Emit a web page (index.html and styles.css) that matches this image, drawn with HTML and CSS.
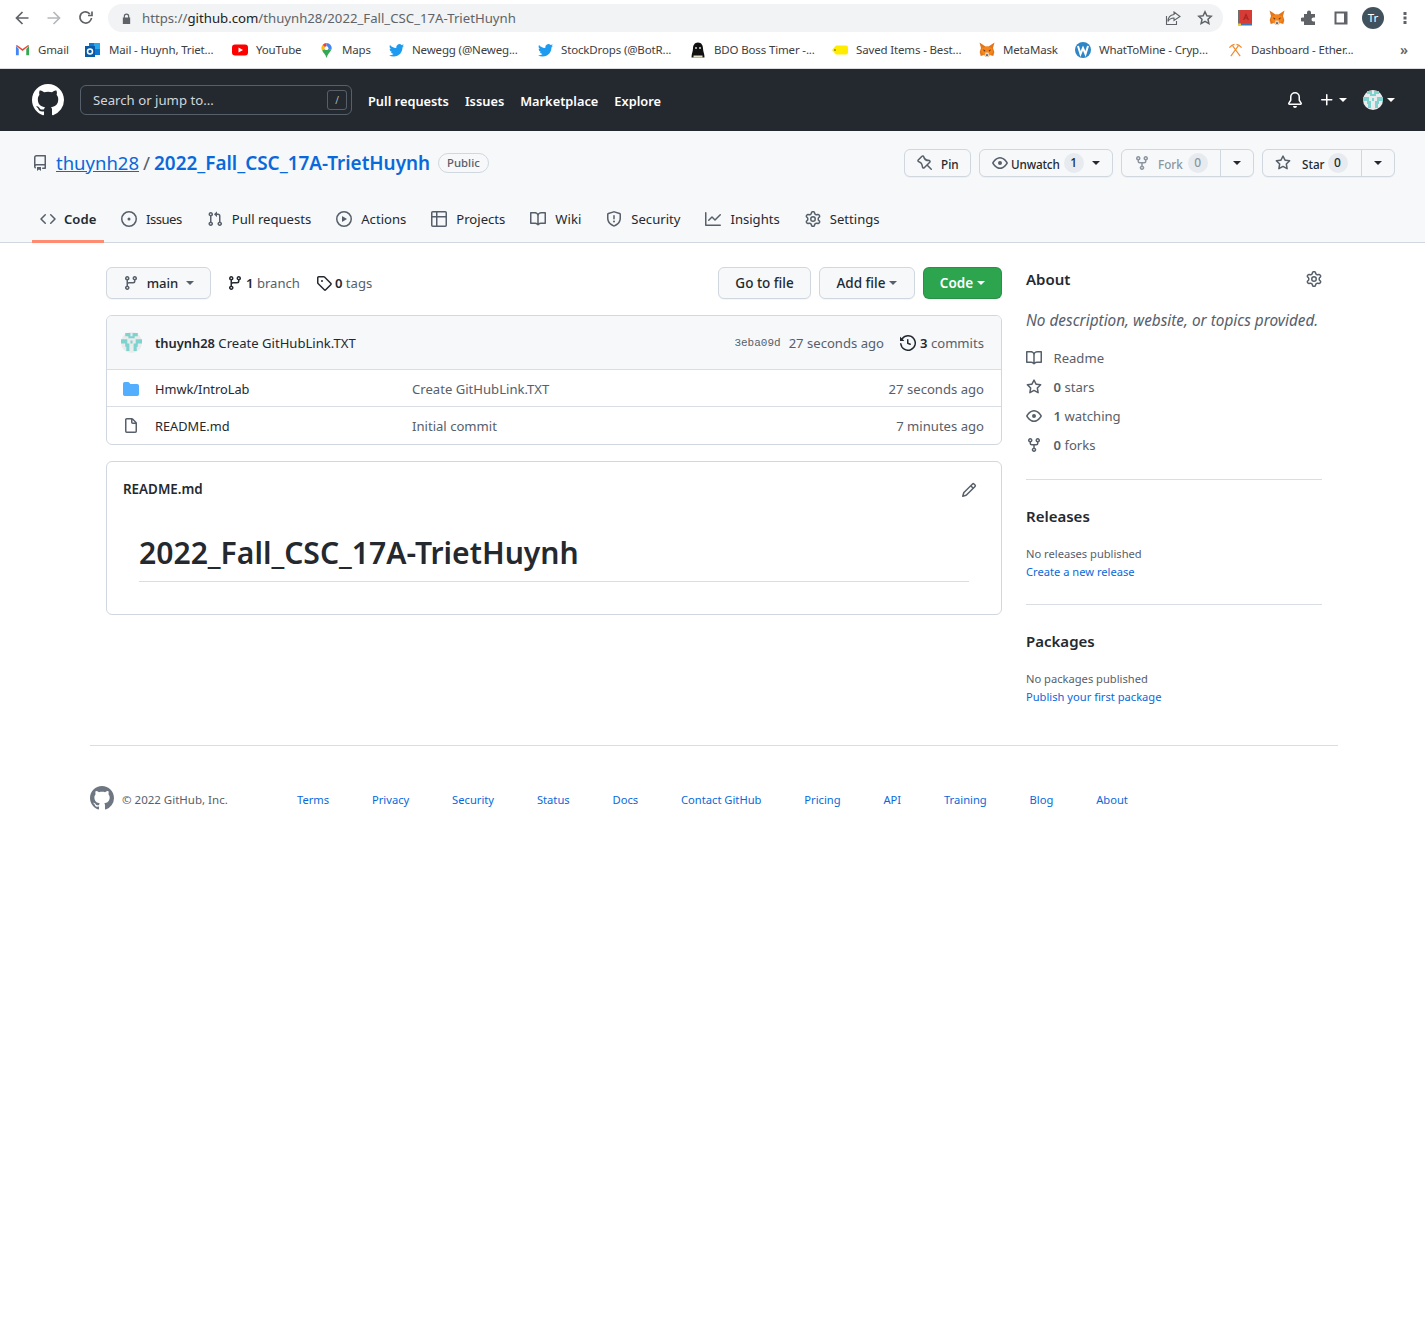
FILE: index.html
```html
<!DOCTYPE html>
<html lang="en">
<head>
<meta charset="utf-8">
<title>thuynh28/2022_Fall_CSC_17A-TrietHuynh</title>
<link rel="stylesheet" href="styles.css">
</head>
<body>
<svg class="sprite" xmlns="http://www.w3.org/2000/svg">
<symbol id="mark" viewBox="0 0 16 16"><path d="M8 0C3.58 0 0 3.58 0 8c0 3.54 2.29 6.53 5.47 7.59.4.07.55-.17.55-.38 0-.19-.01-.82-.01-1.49-2.01.37-2.53-.49-2.69-.94-.09-.23-.48-.94-.82-1.13-.28-.15-.68-.52-.01-.53.63-.01 1.08.58 1.23.82.72 1.21 1.87.87 2.33.66.07-.52.28-.87.51-1.07-1.78-.2-3.64-.89-3.64-3.95 0-.87.31-1.59.82-2.15-.08-.2-.36-1.02.08-2.12 0 0 .67-.21 2.2.82.64-.18 1.32-.27 2-.27.68 0 1.36.09 2 .27 1.53-1.04 2.2-.82 2.2-.82.44 1.1.16 1.92.08 2.12.51.56.82 1.27.82 2.15 0 3.07-1.87 3.75-3.65 3.95.29.25.54.73.54 1.48 0 1.07-.01 1.93-.01 2.2 0 .21.15.46.55.38A8.013 8.013 0 0016 8c0-4.42-3.58-8-8-8z"/></symbol>
<symbol id="repo" viewBox="0 0 16 16"><path d="M2 2.5A2.5 2.5 0 014.5 0h8.75a.75.75 0 01.75.75v12.5a.75.75 0 01-.75.75h-2.5a.75.75 0 110-1.5h1.75v-2h-8a1 1 0 00-.714 1.7.75.75 0 01-1.072 1.05A2.495 2.495 0 012 11.5v-9zm10.5-1V9h-8c-.356 0-.694.074-1 .208V2.5a1 1 0 011-1h8zM5 12.25v3.25a.25.25 0 00.4.2l1.45-1.087a.25.25 0 01.3 0L8.6 15.7a.25.25 0 00.4-.2v-3.25a.25.25 0 00-.25-.25h-3.5a.25.25 0 00-.25.25z"/></symbol>
<symbol id="code" viewBox="0 0 16 16"><path d="M4.72 3.22a.75.75 0 011.06 1.06L2.06 8l3.72 3.72a.75.75 0 11-1.06 1.06L.47 8.53a.75.75 0 010-1.06l4.25-4.25zm6.56 0a.75.75 0 10-1.06 1.06L13.94 8l-3.72 3.72a.75.75 0 101.06 1.06l4.25-4.25a.75.75 0 000-1.06l-4.25-4.25z"/></symbol>
<symbol id="issue" viewBox="0 0 16 16"><path d="M8 9.5a1.5 1.5 0 100-3 1.5 1.5 0 000 3z"/><path d="M8 0a8 8 0 100 16A8 8 0 008 0zM1.5 8a6.5 6.5 0 1113 0 6.5 6.5 0 01-13 0z"/></symbol>
<symbol id="pr" viewBox="0 0 16 16"><path d="M7.177 3.073L9.573.677A.25.25 0 0110 .854v4.792a.25.25 0 01-.427.177L7.177 3.427a.25.25 0 010-.354zM3.75 2.5a.75.75 0 100 1.5.75.75 0 000-1.5zm-2.25.75a2.25 2.25 0 113 2.122v5.256a2.251 2.251 0 11-1.5 0V5.372A2.25 2.25 0 011.5 3.25zM11 2.5h-1V4h1a1 1 0 011 1v5.628a2.251 2.251 0 101.5 0V5A2.5 2.5 0 0011 2.5zm1 10.25a.75.75 0 111.5 0 .75.75 0 01-1.5 0zM3.75 12a.75.75 0 100 1.5.75.75 0 000-1.5z"/></symbol>
<symbol id="play" viewBox="0 0 16 16"><path d="M1.5 8a6.5 6.5 0 1113 0 6.5 6.5 0 01-13 0zM8 0a8 8 0 100 16A8 8 0 008 0zM6.379 5.227A.25.25 0 006 5.442v5.117a.25.25 0 00.379.214l4.264-2.559a.25.25 0 000-.428L6.379 5.227z"/></symbol>
<symbol id="table" viewBox="0 0 16 16"><path d="M0 1.75C0 .784.784 0 1.75 0h12.5C15.216 0 16 .784 16 1.75v12.5A1.75 1.75 0 0114.25 16H1.75A1.75 1.75 0 010 14.25V1.75zM1.5 6.5v7.75c0 .138.112.25.25.25H5v-8H1.5zM5 5H1.5V1.75a.25.25 0 01.25-.25H5V5zm1.5 1.5v8h7.75a.25.25 0 00.25-.25V6.5h-8zm8-1.5h-8V1.5h7.75a.25.25 0 01.25.25V5z"/></symbol>
<symbol id="book" viewBox="0 0 16 16"><path d="M0 1.75A.75.75 0 01.75 1h4.253c1.227 0 2.317.59 3 1.501A3.744 3.744 0 0111.006 1h4.245a.75.75 0 01.75.75v10.5a.75.75 0 01-.75.75h-4.507a2.25 2.25 0 00-1.591.659l-.622.621a.75.75 0 01-1.06 0l-.622-.621A2.25 2.25 0 005.258 13H.75a.75.75 0 01-.75-.75V1.75zm8.755 3a2.25 2.25 0 012.25-2.25H14.5v9h-3.757c-.71 0-1.4.201-1.992.572l.004-7.322zm-1.504 7.324l.004-5.073-.002-2.253A2.25 2.25 0 005.003 2.5H1.5v9h3.757a3.75 3.75 0 011.994.574z"/></symbol>
<symbol id="shield" viewBox="0 0 16 16"><path d="M7.467.133a1.75 1.75 0 011.066 0l5.25 1.68A1.75 1.75 0 0115 3.48V7c0 1.566-.32 3.182-1.303 4.682-.983 1.498-2.585 2.813-5.032 3.855a1.7 1.7 0 01-1.33 0c-2.447-1.042-4.049-2.357-5.032-3.855C1.32 10.182 1 8.566 1 7V3.48a1.75 1.75 0 011.217-1.667l5.25-1.68zm.61 1.429a.25.25 0 00-.153 0l-5.25 1.68a.25.25 0 00-.174.238V7c0 1.358.275 2.666 1.057 3.86.784 1.194 2.121 2.34 4.366 3.297a.2.2 0 00.154 0c2.245-.956 3.582-2.104 4.366-3.298C13.225 9.666 13.5 8.36 13.5 7V3.48a.25.25 0 00-.174-.237l-5.25-1.68zM9 10.5a1 1 0 11-2 0 1 1 0 012 0zm-.25-5.75a.75.75 0 10-1.5 0v3a.75.75 0 001.5 0v-3z"/></symbol>
<symbol id="graph" viewBox="0 0 16 16"><path d="M1.5 1.75a.75.75 0 00-1.5 0v12.5c0 .414.336.75.75.75h14.5a.75.75 0 000-1.5H1.5V1.75zm14.28 2.53a.75.75 0 00-1.06-1.06L10 7.94 7.53 5.47a.75.75 0 00-1.06 0L3.22 8.72a.75.75 0 001.06 1.06L7 7.06l2.47 2.47a.75.75 0 001.06 0l5.25-5.25z"/></symbol>
<symbol id="gear" viewBox="0 0 16 16"><path d="M7.429 1.525a6.593 6.593 0 011.142 0c.036.003.108.036.137.146l.289 1.105c.147.56.55.967.997 1.189.174.086.341.183.501.29.417.278.97.423 1.53.27l1.102-.303c.11-.03.175.016.195.046.219.31.41.641.573.989.014.031.022.11-.059.19l-.815.806c-.411.406-.562.957-.53 1.456a4.588 4.588 0 010 .582c-.032.499.119 1.05.53 1.456l.815.806c.08.08.073.159.059.19a6.494 6.494 0 01-.573.99c-.02.029-.086.074-.195.045l-1.103-.303c-.559-.153-1.112-.008-1.529.27-.16.107-.327.204-.5.29-.449.222-.851.628-.998 1.189l-.289 1.105c-.029.11-.101.143-.137.146a6.613 6.613 0 01-1.142 0c-.036-.003-.108-.037-.137-.146l-.289-1.105c-.147-.56-.55-.967-.997-1.189a4.502 4.502 0 01-.501-.29c-.417-.278-.97-.423-1.53-.27l-1.102.303c-.11.03-.175-.016-.195-.046a6.492 6.492 0 01-.573-.989c-.014-.031-.022-.11.059-.19l.815-.806c.411-.406.562-.957.53-1.456a4.587 4.587 0 010-.582c.032-.499-.119-1.05-.53-1.456l-.815-.806c-.08-.08-.073-.159-.059-.19a6.44 6.44 0 01.573-.99c.02-.029.086-.075.195-.045l1.103.303c.559.153 1.112.008 1.529-.27.16-.107.327-.204.5-.29.449-.222.851-.628.998-1.189l.289-1.105c.029-.11.101-.143.137-.146zM8 0c-.236 0-.47.01-.701.03-.743.065-1.29.615-1.458 1.261l-.29 1.106c-.017.066-.078.158-.211.224a5.994 5.994 0 00-.668.386c-.123.082-.233.09-.3.071L3.27 2.776c-.644-.177-1.392.02-1.82.63a7.977 7.977 0 00-.704 1.217c-.315.675-.111 1.422.363 1.891l.815.806c.05.048.098.147.088.294a6.084 6.084 0 000 .772c.01.147-.038.246-.088.294l-.815.806c-.474.469-.678 1.216-.363 1.891.2.428.436.835.704 1.218.428.609 1.176.806 1.82.63l1.103-.303c.066-.019.176-.011.299.071.213.143.436.272.668.386.133.066.194.158.212.224l.289 1.106c.169.646.715 1.196 1.458 1.26a8.094 8.094 0 001.402 0c.743-.064 1.29-.614 1.458-1.26l.29-1.106c.017-.066.078-.158.211-.224a5.98 5.98 0 00.668-.386c.123-.082.233-.09.3-.071l1.102.302c.644.177 1.392-.02 1.82-.63.268-.382.505-.789.704-1.217.315-.675.111-1.422-.364-1.891l-.814-.806c-.05-.048-.098-.147-.088-.294a6.1 6.1 0 000-.772c-.01-.147.039-.246.088-.294l.814-.806c.475-.469.679-1.216.364-1.891a7.992 7.992 0 00-.704-1.218c-.428-.609-1.176-.806-1.82-.63l-1.103.303c-.066.019-.176.011-.299-.071a5.991 5.991 0 00-.668-.386c-.133-.066-.194-.158-.212-.224L10.16 1.29C9.99.645 9.444.095 8.701.031A8.094 8.094 0 008 0zm1.5 8a1.5 1.5 0 11-3 0 1.5 1.5 0 013 0zM11 8a3 3 0 11-6 0 3 3 0 016 0z"/></symbol>
<symbol id="pin" viewBox="0 0 16 16"><path d="M4.456.734a1.75 1.75 0 012.826.504l.613 1.327a3.081 3.081 0 002.084 1.707l2.454.584c1.332.317 1.8 1.972.832 2.94L11.06 10l3.72 3.72a.75.75 0 11-1.061 1.06L10 11.06l-2.204 2.205c-.968.968-2.623.5-2.94-.832l-.584-2.454a3.081 3.081 0 00-1.707-2.084l-1.327-.613a1.75 1.75 0 01-.504-2.826L4.456.734zM5.92 1.866a.25.25 0 00-.404-.072L1.794 5.516a.25.25 0 00.072.404l1.328.613A4.582 4.582 0 015.73 9.63l.584 2.454a.25.25 0 00.42.12l5.47-5.47a.25.25 0 00-.12-.42L9.63 6.13a4.581 4.581 0 01-3.098-2.537L5.92 1.866z"/></symbol>
<symbol id="eye" viewBox="0 0 16 16"><path d="M1.679 7.932c.412-.621 1.242-1.75 2.366-2.717C5.175 4.242 6.527 3.5 8 3.5c1.473 0 2.824.742 3.955 1.715 1.124.967 1.954 2.096 2.366 2.717a.119.119 0 010 .136c-.412.621-1.242 1.75-2.366 2.717C10.825 11.758 9.473 12.5 8 12.5c-1.473 0-2.824-.742-3.955-1.715C2.92 9.818 2.09 8.69 1.679 8.068a.119.119 0 010-.136zM8 2c-1.981 0-3.67.992-4.933 2.078C1.797 5.169.88 6.423.43 7.1a1.619 1.619 0 000 1.798c.45.678 1.367 1.932 2.637 3.024C4.329 13.008 6.019 14 8 14c1.981 0 3.67-.992 4.933-2.078 1.27-1.091 2.187-2.345 2.637-3.023a1.619 1.619 0 000-1.798c-.45-.678-1.367-1.932-2.637-3.023C11.671 2.992 9.981 2 8 2zm0 8a2 2 0 100-4 2 2 0 000 4z"/></symbol>
<symbol id="fork" viewBox="0 0 16 16"><path d="M5 3.25a.75.75 0 11-1.5 0 .75.75 0 011.5 0zm0 2.122a2.25 2.25 0 10-1.5 0v.878A2.25 2.25 0 005.75 8.5h1.5v2.128a2.251 2.251 0 101.5 0V8.5h1.5a2.25 2.25 0 002.25-2.25v-.878a2.25 2.25 0 10-1.5 0v.878a.75.75 0 01-.75.75h-4.5A.75.75 0 015 6.25v-.878zm3.75 7.378a.75.75 0 11-1.5 0 .75.75 0 011.5 0zm3-8.75a.75.75 0 100-1.5.75.75 0 000 1.5z"/></symbol>
<symbol id="star" viewBox="0 0 16 16"><path d="M8 .25a.75.75 0 01.673.418l1.882 3.815 4.21.612a.75.75 0 01.416 1.279l-3.046 2.97.719 4.192a.75.75 0 01-1.088.791L8 12.347l-3.766 1.98a.75.75 0 01-1.088-.79l.72-4.194L.818 6.374a.75.75 0 01.416-1.28l4.21-.611L7.327.668A.75.75 0 018 .25zm0 2.445L6.615 5.5a.75.75 0 01-.564.41l-3.097.45 2.24 2.184a.75.75 0 01.216.664l-.528 3.084 2.769-1.456a.75.75 0 01.698 0l2.77 1.456-.53-3.084a.75.75 0 01.216-.664l2.24-2.183-3.096-.45a.75.75 0 01-.564-.41L8 2.694v.001z"/></symbol>
<symbol id="branch" viewBox="0 0 16 16"><path d="M11.75 2.5a.75.75 0 100 1.5.75.75 0 000-1.5zm-2.25.75a2.25 2.25 0 113 2.122V6A2.5 2.5 0 0110 8.5H6a1 1 0 00-1 1v1.128a2.251 2.251 0 11-1.5 0V5.372a2.25 2.25 0 111.5 0v1.836A2.492 2.492 0 016 7h4a1 1 0 001-1v-.628A2.25 2.25 0 019.5 3.25zM4.25 12a.75.75 0 100 1.5.75.75 0 000-1.5zM3.5 3.25a.75.75 0 111.5 0 .75.75 0 01-1.5 0z"/></symbol>
<symbol id="tag" viewBox="0 0 16 16"><path d="M2.5 7.775V2.75a.25.25 0 01.25-.25h5.025a.25.25 0 01.177.073l6.25 6.25a.25.25 0 010 .354l-5.025 5.025a.25.25 0 01-.354 0l-6.25-6.25a.25.25 0 01-.073-.177zm-1.5 0V2.75C1 1.784 1.784 1 2.75 1h5.025c.464 0 .91.184 1.238.513l6.25 6.25a1.75 1.75 0 010 2.474l-5.026 5.026a1.75 1.75 0 01-2.474 0l-6.25-6.25A1.75 1.75 0 011 7.775zM6 5a1 1 0 100 2 1 1 0 000-2z"/></symbol>
<symbol id="history" viewBox="0 0 16 16"><path d="M1.643 3.143L.427 1.927A.25.25 0 000 2.104V5.75c0 .138.112.25.25.25h3.646a.25.25 0 00.177-.427L2.715 4.215a6.5 6.5 0 11-1.18 4.458.75.75 0 10-1.493.154 8.001 8.001 0 101.6-5.684zM7.75 4a.75.75 0 01.75.75v2.992l2.028.812a.75.75 0 01-.557 1.392l-2.5-1A.75.75 0 017 8.25v-3.5A.75.75 0 017.75 4z"/></symbol>
<symbol id="file" viewBox="0 0 16 16"><path d="M3.75 1.5a.25.25 0 00-.25.25v11.5c0 .138.112.25.25.25h8.5a.25.25 0 00.25-.25V6H9.75A1.75 1.75 0 018 4.25V1.5H3.75zm5.75.56v2.19c0 .138.112.25.25.25h2.19L9.5 2.06zM2 1.75C2 .784 2.784 0 3.75 0h5.086c.464 0 .909.184 1.237.513l3.414 3.414c.329.328.513.773.513 1.237v8.086A1.75 1.75 0 0112.25 15h-8.5A1.75 1.75 0 012 13.25V1.75z"/></symbol>
<symbol id="dir" viewBox="0 0 16 16"><path d="M1.75 1A1.75 1.75 0 000 2.75v10.5C0 14.216.784 15 1.75 15h12.5A1.75 1.75 0 0016 13.25v-8.5A1.75 1.75 0 0014.25 3H7.5a.25.25 0 01-.2-.1l-.9-1.2C6.07 1.26 5.55 1 5 1H1.75z"/></symbol>
<symbol id="pencil" viewBox="0 0 16 16"><path d="M11.013 1.427a1.75 1.75 0 012.474 0l1.086 1.086a1.75 1.75 0 010 2.474l-8.61 8.61c-.21.21-.47.364-.756.445l-3.251.93a.75.75 0 01-.927-.928l.929-3.25a1.75 1.75 0 01.445-.758l8.61-8.61zm1.414 1.06a.25.25 0 00-.354 0L10.811 3.75l1.439 1.44 1.263-1.263a.25.25 0 000-.354l-1.086-1.086zM11.189 6.25L9.75 4.81l-6.286 6.287a.25.25 0 00-.064.108l-.558 1.953 1.953-.558a.249.249 0 00.108-.064l6.286-6.286z"/></symbol>
<symbol id="bell" viewBox="0 0 16 16"><path d="M8 16a2 2 0 001.985-1.75c.017-.137-.097-.25-.235-.25h-3.5c-.138 0-.252.113-.235.25A2 2 0 008 16z"/><path d="M8 1.5A3.5 3.5 0 004.5 5v2.947c0 .346-.102.683-.294.97l-1.703 2.556a.018.018 0 00-.003.01l.001.006c0 .002.002.004.004.006a.017.017 0 00.006.004l.007.001h10.964l.007-.001a.016.016 0 00.006-.004.016.016 0 00.004-.006l.001-.007a.017.017 0 00-.003-.01l-1.703-2.554a1.75 1.75 0 01-.294-.97V5A3.5 3.5 0 008 1.5zM3 5a5 5 0 0110 0v2.947c0 .05.015.098.042.139l1.703 2.555A1.518 1.518 0 0113.482 13H2.518a1.518 1.518 0 01-1.263-2.36l1.703-2.554A.25.25 0 003 7.947V5z"/></symbol>
<symbol id="plus" viewBox="0 0 16 16"><path d="M7.75 2a.75.75 0 01.75.75V7h4.25a.75.75 0 110 1.5H8.5v4.25a.75.75 0 11-1.5 0V8.5H2.75a.75.75 0 010-1.5H7V2.75A.75.75 0 017.75 2z"/></symbol>
<symbol id="identicon" viewBox="0 0 20 20"><circle cx="10" cy="10" r="10" fill="#e9ebec"/><clipPath id="idc"><circle cx="10" cy="10" r="10"/></clipPath><path clip-path="url(#idc)" fill="#7fd3cf" d="M4 1h5v3H4zM11 1h5v3h-5zM7 4h6v2H7zM0 7h6v4H0zM14 7h6v4h-6zM9 8h2v3H9zM4 11h4v3H4zM12 11h4v3h-4zM5 14h3v4H5zM12 14h3v4h-3z"/></symbol>
<symbol id="twitter" viewBox="0 0 24 24"><path fill="#1d9bf0" d="M23.953 4.57a10 10 0 01-2.825.775 4.958 4.958 0 002.163-3.23 9.958 9.958 0 01-3.127 1.184 4.92 4.92 0 00-8.384 4.482C7.69 8.095 4.067 6.13 1.64 3.162a4.822 4.822 0 00-.666 2.475c0 1.71.87 3.213 2.188 4.096a4.904 4.904 0 01-2.228-.616v.06a4.923 4.923 0 003.946 4.827 4.996 4.996 0 01-2.212.085 4.936 4.936 0 004.604 3.417 9.867 9.867 0 01-6.102 2.105c-.39 0-.779-.023-1.17-.067a13.995 13.995 0 007.557 2.209c9.053 0 13.998-7.496 13.998-13.985 0-.21 0-.42-.015-.63A9.935 9.935 0 0024 4.59z"/></symbol>
<symbol id="fox" viewBox="0 0 16 16"><path fill="#e2761b" d="M15.5.5L9.500 4.500h-3L.5.5 2 6 .7 10l1 4 3.500-1 1.300 2h3l1.300-2 3.500 1 1-4L14 6z"/><path fill="#f6851b" d="M3 6l5-1.500L13 6l1 4-2.500 3h-7L2 10z"/><path fill="#763d16" d="M4 7.500l2.500.7-1.200 1.500zM12 7.500l-2.500.7 1.200 1.500z"/><path fill="#e4d5c8" d="M6.500 10.500h3l1 3-1 1.500h-3l-1-1.500z"/><path fill="#233447" d="M6.800 12.500h2.400l-.5 1.200H7.300z"/></symbol>
</svg>

<div class="browser">
  <div class="toolbar">
    <div class="nav-arrows">
      <svg class="ci" viewBox="0 0 16 16"><path class="st-dark" d="M14.500 8H2.500M8.500 2L2.500 8l6 6"/></svg>
      <svg class="ci" viewBox="0 0 16 16"><path class="st-light" d="M1.500 8h12M7.500 2l6 6-6 6"/></svg>
      <svg class="ci" viewBox="0 0 16 16"><path class="st-dark" d="M13.500 8A5.500 5.500 0 112 6.500 5.500 5.500 0 0111.800 4M14 1.500V5.500h-4"/></svg>
    </div>
    <div class="omnibox">
      <svg class="lock" viewBox="0 0 12 12"><path d="M3 5V3.500a3 3 0 016 0V5h1v7H2V5zM4.300 5h3.400V3.500a1.700 1.700 0 00-3.400 0z"/></svg>
      <span class="url"><span class="url-dim">https://</span>github.com<span class="url-dim">/thuynh28/2022_Fall_CSC_17A-TrietHuynh</span></span>
      <span class="omni-actions">
        <svg class="ci" viewBox="0 0 16 16"><path class="st-thin" d="M9 2l6 4.500L9 10.500V8C6 8 4 9.500 3 11.500 3 7.500 5 5 9 4.500zM1.500 6v8.500h10V11"/></svg>
        <svg class="ci" viewBox="0 0 16 16"><path class="st-star" d="M8 1.800l1.900 4 4.300.5-3.200 3 .9 4.300L8 11.400l-3.900 2.200.9-4.300-3.200-3 4.300-.5z"/></svg>
      </span>
    </div>
    <div class="ext">
      <svg class="ci" viewBox="0 0 16 16"><path fill="#d63b36" d="M3 0h12v13H3z"/><path fill="#6e6e6e" d="M1 0h2v14H1z"/><path fill="#a52521" d="M9 3l3 7h-1.300l-.6-1.500H7.900L7.300 10H6zM8.300 7.400h1.400L9 5.500z"/><path fill="#3b78b8" d="M3 13h12v2.500H3z"/><path fill="#e7c83c" d="M1 13.500h3V16H1z"/></svg>
      <svg class="ci"><use href="#fox"/></svg>
      <svg class="ci" viewBox="0 0 16 16"><path fill="#5f6368" d="M6 2.500a2 2 0 014 0V4h4v3.500h-1.500a2 2 0 000 4H14V15H3v-3.500H1.500a2 2 0 010-4H3V4h3z"/></svg>
      <svg class="ci" viewBox="0 0 16 16"><path fill="#5f6368" d="M1.500 1.500h13v13h-13zM3.500 3.500v9h7.500v-9z"/></svg>
      <span class="profile">Tr</span>
      <svg class="ci dots" viewBox="0 0 16 16"><path fill="#5f6368" d="M6.500 2h3v3h-3zM6.500 6.500h3v3h-3zM6.500 11h3v3h-3z"/></svg>
    </div>
  </div>
  <div class="bookmarks">
    <span class="bm"><svg class="fav tw" viewBox="0 0 16 16"><path fill="#4285f4" d="M1 3v10h3V6.500L1 3z"/><path fill="#34a853" d="M15 3v10h-3V6.500z"/><path fill="#ea4335" d="M1 3l7 5.500L15 3l-1-1-6 4.500L2 2z"/></svg>Gmail</span>
    <span class="bm"><svg class="fav" viewBox="0 0 16 16"><path fill="#0f78d4" d="M4 1h11v12H4z"/><path fill="#28a8ea" d="M9 1h6v6H9z"/><path fill="#0a5aa5" d="M0 4h10v11H0z"/><circle cx="5" cy="9.500" r="2.500" fill="none" stroke="#fff" stroke-width="1.500"/></svg>Mail - Huynh, Triet...</span>
    <span class="bm"><svg class="fav" viewBox="0 0 16 16"><rect y="2.500" width="16" height="11" rx="3" fill="#f00"/><path fill="#fff" d="M6.500 5.500L11 8l-4.500 2.500z"/></svg>YouTube</span>
    <span class="bm"><svg class="fav tw" viewBox="0 0 16 16"><path fill="#ea4335" d="M8 0a5.500 5.500 0 00-4.200 2L8 6z"/><path fill="#4285f4" d="M8 0a5.500 5.500 0 015.300 7L8 6z"/><path fill="#fbbc04" d="M3.800 2a5.500 5.500 0 00-.5 6L8 6z"/><path fill="#34a853" d="M3.300 8C4.500 10.500 7 12 8 16c1-4 4-6 5.300-9L8 6z"/><circle cx="8" cy="5.500" r="2" fill="#fff"/></svg>Maps</span>
    <span class="bm"><svg class="fav tw"><use href="#twitter"/></svg>Newegg (@Neweg...</span>
    <span class="bm"><svg class="fav tw"><use href="#twitter"/></svg>StockDrops (@BotR...</span>
    <span class="bm"><svg class="fav" viewBox="0 0 16 16"><path fill="#111" d="M8 .5c3.500 0 5 3 5 6 0 3 1.500 5 1.500 9h-13c0-4 1.500-6 1.500-9 0-3 1.500-6 5-6z"/><circle cx="6" cy="6" r="1" fill="#d8d8d8"/><circle cx="10" cy="6" r="1" fill="#d8d8d8"/><path fill="#e8e2c8" d="M3.500 13.500h9v2h-9z"/></svg>BDO Boss Timer -...</span>
    <span class="bm"><svg class="fav" viewBox="0 0 16 16"><path fill="#ffec00" d="M4 3.500h10a2 2 0 012 2v5a2 2 0 01-2 2H4L0 8z"/><circle cx="3" cy="8" r=".8" fill="#444"/></svg>Saved Items - Best...</span>
    <span class="bm"><svg class="fav"><use href="#fox"/></svg>MetaMask</span>
    <span class="bm"><svg class="fav" viewBox="0 0 16 16"><circle cx="8" cy="8" r="8" fill="#2d86c6"/><path fill="none" stroke="#fff" stroke-width="2" d="M3 4l2.500 8L8 6l2.500 6L13 4"/></svg>WhatToMine - Cryp...</span>
    <span class="bm"><svg class="fav tw" viewBox="0 0 16 16"><path fill="none" stroke="#f2892a" stroke-width="1.200" d="M3 14L11 3M13 14L5 3M1.500 5C4 2 7 1.500 7 1.500M14.500 5C12 2 9 1.500 9 1.500"/></svg>Dashboard - Ether...</span>
    <span class="bm-more">»</span>
  </div>
</div>

<header class="site-head">
  <svg class="gh-logo"><use href="#mark"/></svg>
  <div class="search"><span>Search or jump to...</span><kbd class="slash">/</kbd></div>
  <nav class="site-nav"><a>Pull requests</a><a>Issues</a><a>Marketplace</a><a>Explore</a></nav>
  <div class="head-right">
    <svg class="i"><use href="#bell"/></svg>
    <span class="drop"><svg class="i"><use href="#plus"/></svg><i class="caret"></i></span>
    <span class="drop"><svg class="i20"><use href="#identicon"/></svg><i class="caret"></i></span>
  </div>
</header>

<section class="repo-head">
  <div class="repo-title-row">
    <div class="repo-title">
      <svg class="i muted"><use href="#repo"/></svg>
      <a class="owner">thuynh28</a><span class="sep">/</span><a class="repo-name">2022_Fall_CSC_17A-TrietHuynh</a>
      <span class="label">Public</span>
    </div>
    <div class="repo-actions">
      <span class="btn-sm w-pin"><svg class="i muted"><use href="#pin"/></svg><span>Pin</span></span>
      <span class="btn-sm w-watch"><svg class="i muted"><use href="#eye"/></svg><span class="tight">Unwatch</span><b class="count">1</b><i class="caret dark"></i></span>
      <span class="split w-split disabled"><span class="split-main"><svg class="i"><use href="#fork"/></svg><span>Fork</span><b class="count">0</b></span><span class="split-drop"><i class="caret dark"></i></span></span>
      <span class="split w-split star-btn"><span class="split-main"><svg class="i muted"><use href="#star"/></svg><span>Star</span><b class="count">0</b></span><span class="split-drop"><i class="caret dark"></i></span></span>
    </div>
  </div>
  <nav class="tabs">
    <a class="tab active"><svg class="i muted"><use href="#code"/></svg>Code</a>
    <a class="tab tab-issues"><svg class="i muted"><use href="#issue"/></svg>Issues</a>
    <a class="tab"><svg class="i muted"><use href="#pr"/></svg>Pull requests</a>
    <a class="tab"><svg class="i muted"><use href="#play"/></svg>Actions</a>
    <a class="tab"><svg class="i muted"><use href="#table"/></svg>Projects</a>
    <a class="tab"><svg class="i muted"><use href="#book"/></svg>Wiki</a>
    <a class="tab"><svg class="i muted"><use href="#shield"/></svg>Security</a>
    <a class="tab"><svg class="i muted"><use href="#graph"/></svg>Insights</a>
    <a class="tab"><svg class="i muted"><use href="#gear"/></svg>Settings</a>
  </nav>
</section>

<main class="layout">
  <div class="main-col">
    <div class="file-nav">
      <span class="btn w-main"><svg class="i muted"><use href="#branch"/></svg><span>main</span><i class="caret muted-caret"></i></span>
      <span class="stat"><svg class="i"><use href="#branch"/></svg><span><b>1</b> branch</span></span>
      <span class="stat"><svg class="i"><use href="#tag"/></svg><span><b>0</b> tags</span></span>
      <span class="spacer"></span>
      <span class="btn w-goto">Go to file</span>
      <span class="btn w-add">Add file<i class="caret muted-caret"></i></span>
      <span class="btn green w-code">Code<i class="caret light"></i></span>
    </div>
    <div class="box files">
      <div class="commit-row">
        <svg class="i20"><use href="#identicon"/></svg>
        <span class="commit-msg"><b>thuynh28</b> Create GitHubLink.TXT</span>
        <span class="spacer"></span>
        <span class="sha">3eba09d</span>
        <span class="age">27 seconds ago</span>
        <span class="commits"><svg class="i dark"><use href="#history"/></svg><span><b>3</b> commits</span></span>
      </div>
      <div class="file-row">
        <svg class="i folder"><use href="#dir"/></svg>
        <a class="fname">Hmwk/IntroLab</a>
        <span class="fmsg">Create GitHubLink.TXT</span>
        <span class="ftime">27 seconds ago</span>
      </div>
      <div class="file-row">
        <svg class="i muted"><use href="#file"/></svg>
        <a class="fname">README.md</a>
        <span class="fmsg">Initial commit</span>
        <span class="ftime">7 minutes ago</span>
      </div>
    </div>
    <div class="box readme">
      <div class="readme-head"><b>README.md</b><svg class="i muted"><use href="#pencil"/></svg></div>
      <div class="readme-body"><h1>2022_Fall_CSC_17A-TrietHuynh</h1></div>
    </div>
  </div>
  <aside class="side">
    <div class="side-block about">
      <div class="side-title"><h2>About</h2><svg class="i muted"><use href="#gear"/></svg></div>
      <p class="desc">No description, website, or topics provided.</p>
      <ul class="meta">
        <li><svg class="i muted"><use href="#book"/></svg>Readme</li>
        <li><svg class="i muted"><use href="#star"/></svg><span><b>0</b> stars</span></li>
        <li><svg class="i muted"><use href="#eye"/></svg><span><b>1</b> watching</span></li>
        <li><svg class="i muted"><use href="#fork"/></svg><span><b>0</b> forks</span></li>
      </ul>
    </div>
    <div class="side-block">
      <h2>Releases</h2>
      <p class="small">No releases published</p>
      <a class="small-link">Create a new release</a>
    </div>
    <div class="side-block">
      <h2>Packages</h2>
      <p class="small">No packages published</p>
      <a class="small-link">Publish your first package</a>
    </div>
  </aside>
</main>

<footer class="footer">
  <svg class="foot-logo"><use href="#mark"/></svg>
  <span class="copy">© 2022 GitHub, Inc.</span>
  <nav class="foot-links"><a>Terms</a><a>Privacy</a><a>Security</a><a>Status</a><a>Docs</a><a>Contact GitHub</a><a>Pricing</a><a>API</a><a>Training</a><a>Blog</a><a>About</a></nav>
</footer>
</body>
</html>
```
FILE: styles.css
```css
* { box-sizing: border-box; }
html, body { margin: 0; padding: 0; background: #fff; }
body { font-family: "Noto Sans", "Open Sans", sans-serif; font-size: 13.1px; line-height: 20px; color: #24292f; height: 1328px; overflow: hidden; }
a { color: inherit; text-decoration: none; }
b { font-weight: 600; }
h1, h2, p, ul { margin: 0; padding: 0; }
svg { fill-rule: evenodd; }
.sprite { display: none; }
.i { width: 16px; height: 16px; fill: currentColor; flex: none; display: block; }
.i20 { width: 20px; height: 20px; flex: none; display: block; }
.muted { color: #57606a; }
.dark { color: #24292f; }

/* browser chrome */
.browser { height: 69px; background: #fff; border-bottom: 1px solid #dadce0; }
.toolbar { height: 36px; display: flex; align-items: center; padding: 0 12px 0 14px; }
.ci { width: 16px; height: 16px; flex: none; display: block; }
.nav-arrows { display: flex; gap: 16px; width: 94px; }
.st-dark, .st-light, .st-thin, .st-star { fill: none; stroke-width: 1.700; }
.st-dark { stroke: #5f6368; }
.st-light { stroke: #b5b8bc; }
.st-thin { stroke: #5f6368; stroke-width: 1.100; }
.st-star { stroke: #5f6368; stroke-width: 1.500; }
.omnibox { width: 1115px; height: 28px; background: #f1f3f4; border-radius: 14px; display: flex; align-items: center; padding: 0 10px 0 13px; color: #5f6368; font-size: 13.200px; }
.lock { width: 11px; height: 11px; fill: #5f6368; flex: none; margin-right: 10px; }
.url { color: #202124; }
.url-dim { color: #5f6368; }
.omni-actions { margin-left: auto; display: flex; gap: 16px; }
.ext { display: flex; align-items: center; gap: 16px; margin-left: 14px; }
.profile { width: 22px; height: 22px; border-radius: 50%; background: #41525f; color: #fff; font-size: 11.500px; display: flex; align-items: center; justify-content: center; margin-left: -3px; }
.dots { margin-left: -3px; }
.bookmarks { display: grid; grid-template-columns: 70px 147px 87px 70px 149px 152px 142px 147px 96px 153px 172px 20px; height: 32px; padding: 0 0 0 15px; align-items: center; font-size: 11.500px; color: #3c4043; margin-top: -2px; }
.bm { display: flex; align-items: center; gap: 8px; white-space: nowrap; letter-spacing: -0.150px; }
.fav { width: 16px; height: 16px; flex: none; display: block; }
.tw { width: 15px; height: 15px; }
.bm-more { font-size: 14px; font-weight: 600; color: #5f6368; }

/* site header */
.site-head { height: 62px; background: #24292f; color: #fff; display: flex; align-items: center; padding: 0 30px 0 32px; }
.gh-logo { width: 32px; height: 32px; fill: #fff; flex: none; margin-right: 16px; }
.search { width: 272px; height: 30px; border: 1px solid #57606a; border-radius: 6px; display: flex; align-items: center; justify-content: space-between; padding: 0 4px 0 12px; color: #d0d7de; font-size: 13.200px; margin-right: 16px; }
.slash { width: 20px; height: 20px; border: 1px solid #57606a; border-radius: 3px; font-size: 10px; display: flex; align-items: center; justify-content: center; color: #afb8c1; font-family: inherit; }
.site-nav { display: flex; gap: 16px; font-weight: 600; font-size: 12.800px; padding-top: 2px; }
.head-right { margin-left: auto; display: flex; align-items: center; gap: 16px; }
.drop { display: flex; align-items: center; gap: 4px; }
.caret { width: 0; height: 0; border: 4px solid transparent; border-top-color: currentColor; border-bottom: 0; display: block; flex: none; }

/* repo head */
.repo-head { height: 112px; background: #f6f8fa; border-bottom: 1px solid #d0d7de; padding-top: 18px; }
.repo-title-row { display: flex; justify-content: space-between; align-items: center; padding: 0 30px 0 32px; height: 28px; }
.repo-title { display: flex; align-items: center; font-size: 18.900px; line-height: 28px; color: #57606a; }
.repo-title > .i { margin-right: 8px; }
.owner { color: #0969da; text-decoration: underline; font-size: 18.500px; }
.sep { margin: 0 4px; }
.repo-name { color: #0969da; font-weight: 600; }
.label { margin-left: 8px; height: 20px; padding: 0 8px; border: 1px solid #d0d7de; border-radius: 10px; font-size: 11.300px; font-weight: 500; line-height: 18px; color: #57606a; display: block; }
.repo-actions { display: flex; gap: 8px; font-size: 11.700px; font-weight: 500; }
.btn-sm, .split { height: 28px; background: #f6f8fa; border: 1px solid #d0d7de; border-radius: 6px; display: flex; align-items: center; box-shadow: 0 1px 0 rgba(27,31,36,.04); }
.btn-sm { padding: 0 12px; gap: 8px; }
.btn-sm > span, .split-main > span { padding-top: 1px; }
.w-pin { width: 67px; }
.w-watch { width: 134px; gap: 3px; }
.w-watch .count { margin-left: 1px; margin-right: 5px; }
.tight { letter-spacing: -0.150px; }
.w-split { width: 133px; }
.split-main { flex: 1; display: flex; align-items: center; padding-left: 12px; height: 100%; gap: 8px; border-right: 1px solid #d0d7de; }
.split-drop { width: 32px; display: flex; align-items: center; justify-content: center; }
.disabled .split-main, .disabled .count { color: #8c959f; }
.count { min-width: 20px; height: 20px; border-radius: 10px; background: rgba(175,184,193,.2); font-size: 12px; font-weight: 500; line-height: 20px; text-align: center; color: #24292f; padding: 0 4px; }
.split-main .count { margin-left: -3px; }
.star-btn .split-main { gap: 11px; }
.star-btn .split-main .count { margin-left: -8px; }
.tabs { display: flex; gap: 9px; margin-top: 18px; padding-left: 32px; height: 48px; font-size: 13.100px; }
.tab { height: 48px; display: flex; align-items: center; gap: 9px; padding: 3px 8px 0; white-space: nowrap; border-bottom: 3px solid transparent; }
.tab.active { font-weight: 600; border-bottom-color: #fd8c73; width: 72px; gap: 8px; }
.tab-issues { letter-spacing: -0.500px; }

/* layout */
.layout { display: grid; grid-template-columns: 896px 296px; gap: 24px; padding: 24px 0 0 106px; height: 502px; width: 1338px; }
.main-col { display: flex; flex-direction: column; }
.file-nav { display: flex; align-items: center; height: 32px; margin-bottom: 16px; }
.btn { height: 32px; border: 1px solid #d0d7de; border-radius: 6px; background: #f6f8fa; display: flex; align-items: center; justify-content: center; font-weight: 500; font-size: 13.500px; gap: 4px; box-shadow: 0 1px 0 rgba(27,31,36,.04); }
.w-main { width: 105px; gap: 8px; margin-right: 16px; font-size: 13.100px; }
.muted-caret { color: #57606a; }
.w-goto { width: 93px; margin-right: 8px; }
.w-add { width: 96px; margin-right: 8px; }
.w-code { width: 79px; }
.green { background: #2da44e; color: #fff; border-color: rgba(27,31,36,.15); font-weight: 600; }
.light { color: #fff; }
.stat { display: flex; align-items: center; color: #57606a; margin-right: 16px; gap: 3px; white-space: nowrap; }
.stat b { color: #24292f; }
.stat .i { color: #24292f; }
.spacer { flex: 1; }
.box { border: 1px solid #d0d7de; border-radius: 6px; background: #fff; }
.files { height: 130px; margin-bottom: 16px; overflow: hidden; }
.commit-row { height: 54px; background: #f6f8fa; border-bottom: 1px solid #d8dee4; display: flex; align-items: center; padding: 0 17px 0 14px; color: #24292f; }
.commit-row .i20 { width: 21px; height: 21px; margin-right: 13px; }
.commit-msg b { font-size: 12.900px; }
.sha { font-family: "Liberation Mono", monospace; font-size: 11px; color: #57606a; margin-right: 8px; }
.age { color: #57606a; margin-right: 16px; }
.commits { display: flex; align-items: center; color: #57606a; gap: 4px; }
.commits b { color: #24292f; }
.file-row { height: 37px; display: grid; grid-template-columns: 16px 241px 1fr auto; align-items: center; column-gap: 16px; padding: 0 17px 0 16px; border-bottom: 1px solid #d8dee4; }
.file-row:nth-child(2) { padding-top: 1px; }
.file-row:last-child { border-bottom: 0; }
.folder { color: #54aeff; }
.fname { color: #24292f; font-size: 12.800px; }
.fmsg, .ftime { color: #57606a; }
.readme { height: 154px; }
.readme-head { display: flex; justify-content: space-between; align-items: center; height: 54px; padding: 0 24px 0 16px; }
.readme-head b { font-size: 13.400px; }
.readme-head .i { margin-top: 2px; }
.readme-body { padding: 0 32px 0 32px; }
h1 { font-size: 30.100px; font-weight: 600; line-height: 40px; height: 56px; padding: 7px 0 0; margin-top: 10px; border-bottom: 1px solid #d8dee4; }
.side { display: block; }
.side-block { border-bottom: 1px solid #d8dee4; padding-bottom: 23px; margin-bottom: 24px; }
.side-block:last-child { border-bottom: 0; }
.side h2 { font-size: 15px; font-weight: 600; line-height: 24px; margin-bottom: 17px; }
.about { padding-bottom: 20px; }
.side-title { display: flex; justify-content: space-between; align-items: flex-start; }
.side-title .i { margin-top: 4px; }
.desc { font-style: italic; font-size: 15.350px; line-height: 24px; color: #57606a; margin-bottom: 11px; }
.meta { list-style: none; color: #57606a; }
.meta li { display: flex; align-items: center; gap: 11.500px; height: 29px; }
.meta b { color: #57606a; }
.small { font-size: 11.150px; line-height: 18px; color: #57606a; }
.small-link { font-size: 11.150px; line-height: 18px; color: #0969da; display: block; }

/* footer */
.footer { width: 1248px; margin-left: 90px; border-top: 1px solid #d8dee4; padding-top: 40px; display: flex; align-items: center; font-size: 11.200px; }
.foot-logo { width: 24px; height: 24px; fill: #6e7781; flex: none; margin-right: 8px; }
.copy { color: #57606a; width: 175px; white-space: nowrap; padding-top: 4px; font-size: 11.500px; }
.foot-links { display: flex; gap: 42.800px; color: #0969da; white-space: nowrap; padding-top: 4px; }
```
